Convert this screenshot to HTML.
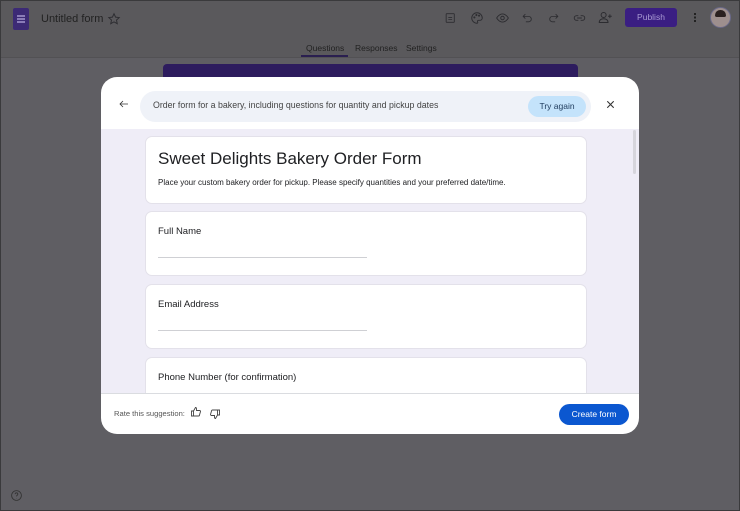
<!DOCTYPE html>
<html><head><meta charset="utf-8"><style>
*{box-sizing:border-box;margin:0;padding:0}
body{width:740px;height:511px;overflow:hidden;background:#5f5e63;font-family:"Liberation Sans",sans-serif;position:relative}
.frame{position:absolute;left:0;top:0;width:740px;height:511px;border:1px solid #3a3a3c;pointer-events:none;z-index:9}
.hdr{position:absolute;left:0;top:0;width:740px;height:58px;background:#5a595c;border-bottom:1px solid #525154}
.abs{position:absolute}
.ic{position:absolute;stroke:#2c2c30;fill:none;stroke-width:1.6}
.modal{position:absolute;left:101px;top:77px;width:538px;height:357px;background:#fff;border-radius:16px;overflow:hidden}
.content{position:absolute;left:0;top:52px;width:538px;height:265px;background:#efedf7;border-bottom:1px solid #dadce0;overflow:hidden}
.card{position:absolute;left:44px;width:442px;background:#fff;border-radius:7px;border:1px solid #e3e1ea}
.lbl{position:absolute;left:12px;font-size:9.5px;color:#202124}
.line{position:absolute;left:12px;width:209px;height:1px;background:#cfd0d4}
</style></head><body>
<div class="frame"></div>
<div class="hdr">
 <div class="abs" style="left:13px;top:8px;width:16px;height:22px;background:#3c2a75;border-radius:2px"></div>
 <div class="abs" style="left:17px;top:15px;width:8px;height:1.5px;background:#8a7cb8;box-shadow:0 3px 0 #8a7cb8,0 6px 0 #8a7cb8"></div>
 <div class="abs" style="left:41px;top:13px;font-size:11px;color:#222">Untitled form</div>
 <svg class="ic" style="left:107px;top:12px" width="14" height="14" viewBox="0 0 24 24"><path d="M12 3l2.7 5.8 6.3.7-4.7 4.3 1.3 6.2L12 16.9 6.4 20l1.3-6.2L3 9.5l6.3-.7z"/></svg>
 <div class="abs" style="left:306px;top:43px;font-size:8.5px;color:#222">Questions</div>
 <div class="abs" style="left:301px;top:55px;width:47px;height:2px;background:#2a1f50"></div>
 <div class="abs" style="left:355px;top:43px;font-size:8.5px;color:#222">Responses</div>
 <div class="abs" style="left:406px;top:43px;font-size:8.5px;color:#222">Settings</div>
 <svg class="ic" style="left:444px;top:11px" width="13" height="14" viewBox="0 0 24 24"><rect x="4" y="4" width="15" height="16" rx="1"/><path d="M8 11h7M8 15h7"/></svg>
 <svg class="ic" style="left:470px;top:11px" width="14" height="14" viewBox="0 0 24 24"><path d="M12 3a9 9 0 100 18c1.5 0 1.5-1.5 1-2.5-.7-1.3.3-2.5 1.7-2.5H17a4 4 0 004-4c0-5-4-9-9-9z"/><circle cx="7.5" cy="11" r="1"/><circle cx="11" cy="7" r="1"/><circle cx="15.5" cy="8" r="1"/></svg>
 <svg class="ic" style="left:495px;top:11px" width="15" height="14" viewBox="0 0 24 24"><path d="M2 12s4-7 10-7 10 7 10 7-4 7-10 7S2 12 2 12z"/><circle cx="12" cy="12" r="3"/></svg>
 <svg class="ic" style="left:521px;top:11px" width="13" height="14" viewBox="0 0 24 24"><path d="M8 5L4 9l4 4M4 9h10a5 5 0 010 10H9"/></svg>
 <svg class="ic" style="left:547px;top:11px" width="13" height="14" viewBox="0 0 24 24"><path d="M16 5l4 4-4 4M20 9H10a5 5 0 000 10h5"/></svg>
 <svg class="ic" style="left:572px;top:11px" width="15" height="14" viewBox="0 0 24 24"><path d="M10 8H7a4 4 0 000 8h3M14 8h3a4 4 0 010 8h-3M8 12h8"/></svg>
 <svg class="ic" style="left:598px;top:10px" width="15" height="15" viewBox="0 0 24 24"><circle cx="9" cy="8" r="4"/><path d="M2 20c0-4 3-6 7-6s7 2 7 6zM19 7v6M16 10h6"/></svg>
 <div class="abs" style="left:625px;top:8px;width:52px;height:19px;background:#3a1e82;border-radius:3px;color:#a99ad4;font-size:8.5px;text-align:center;line-height:19px">Publish</div>
 <div class="abs" style="left:694px;top:13px;width:2px;height:2px;background:#222;box-shadow:0 3.5px 0 #222,0 7px 0 #222"></div>
 <div class="abs" style="left:710px;top:7px;width:21px;height:21px;border-radius:50%;border:1.5px solid #6b6a8a;background:#9e8f8e"></div>
 <div class="abs" style="left:715px;top:10px;width:11px;height:7px;border-radius:6px 6px 2px 2px;background:#2a2020"></div>
</div>
<div class="abs" style="left:163px;top:64px;width:415px;height:13px;background:#2d1c5e;border-radius:4px 4px 0 0"></div>
<svg class="ic" style="left:10px;top:489px;stroke:#333" width="13" height="13" viewBox="0 0 24 24"><circle cx="12" cy="12" r="9"/><path d="M9.5 9.5a2.5 2.5 0 115 0c0 2-2.5 2-2.5 4M12 17v.5"/></svg>

<div class="modal">
 <svg class="ic" style="left:17px;top:21px;stroke:#333" width="12" height="12" viewBox="0 0 24 24"><path d="M20 12H4M10 6l-6 6 6 6"/></svg>
 <div class="abs" style="left:39px;top:14px;width:451px;height:31px;background:#eff2f8;border-radius:16px"></div>
 <div class="abs" style="left:52px;top:23px;font-size:8.8px;color:#444">Order form for a bakery, including questions for quantity and pickup dates</div>
 <div class="abs" style="left:427px;top:19px;width:58px;height:21px;background:#c4e3fb;border-radius:11px;font-size:8.5px;color:#1d3a5c;text-align:center;line-height:21px">Try again</div>
 <svg class="ic" style="left:504px;top:22px;stroke:#333" width="11" height="11" viewBox="0 0 24 24"><path d="M5 5l14 14M19 5L5 19" stroke-width="2.4"/></svg>
 <div class="content">
  <div class="card" style="top:7px;height:68px">
   <div class="abs" style="left:12px;top:12px;font-size:17px;color:#202124">Sweet Delights Bakery Order Form</div>
   <div class="abs" style="left:12px;top:41px;font-size:8px;color:#202124">Place your custom bakery order for pickup. Please specify quantities and your preferred date/time.</div>
  </div>
  <div class="card" style="top:82px;height:65px"><div class="lbl" style="top:14px">Full Name</div><div class="line" style="top:45px"></div></div>
  <div class="card" style="top:155px;height:65px"><div class="lbl" style="top:14px">Email Address</div><div class="line" style="top:45px"></div></div>
  <div class="card" style="top:228px;height:60px"><div class="lbl" style="top:14px">Phone Number (for confirmation)</div></div>
  <div class="abs" style="left:532px;top:1px;width:3px;height:44px;background:#d6d5dc;border-radius:2px"></div>
 </div>
 <div class="abs" style="left:13px;top:332px;font-size:7.6px;color:#555">Rate this suggestion:</div>
 <svg class="ic" style="left:89px;top:329px;stroke:#444;stroke-width:1.8" width="12" height="12" viewBox="0 0 24 24"><path d="M3 10h4v10H3zM7 10l4-7c2 0 2 2 2 3v3h6c1 0 2 1 2 2l-2 7c0 1-1 2-2 2H7"/></svg>
 <svg class="ic" style="left:108px;top:331px;stroke:#444;stroke-width:1.8" width="12" height="12" viewBox="0 0 24 24"><path d="M21 14h-4V4h4zM17 14l-4 7c-2 0-2-2-2-3v-3H5c-1 0-2-1-2-2l2-7c0-1 1-2 2-2h10"/></svg>
 <div class="abs" style="left:458px;top:327px;width:70px;height:21px;background:#0b57d0;border-radius:11px;color:#fff;font-size:8.5px;text-align:center;line-height:21px">Create form</div>
</div>
</body></html>
